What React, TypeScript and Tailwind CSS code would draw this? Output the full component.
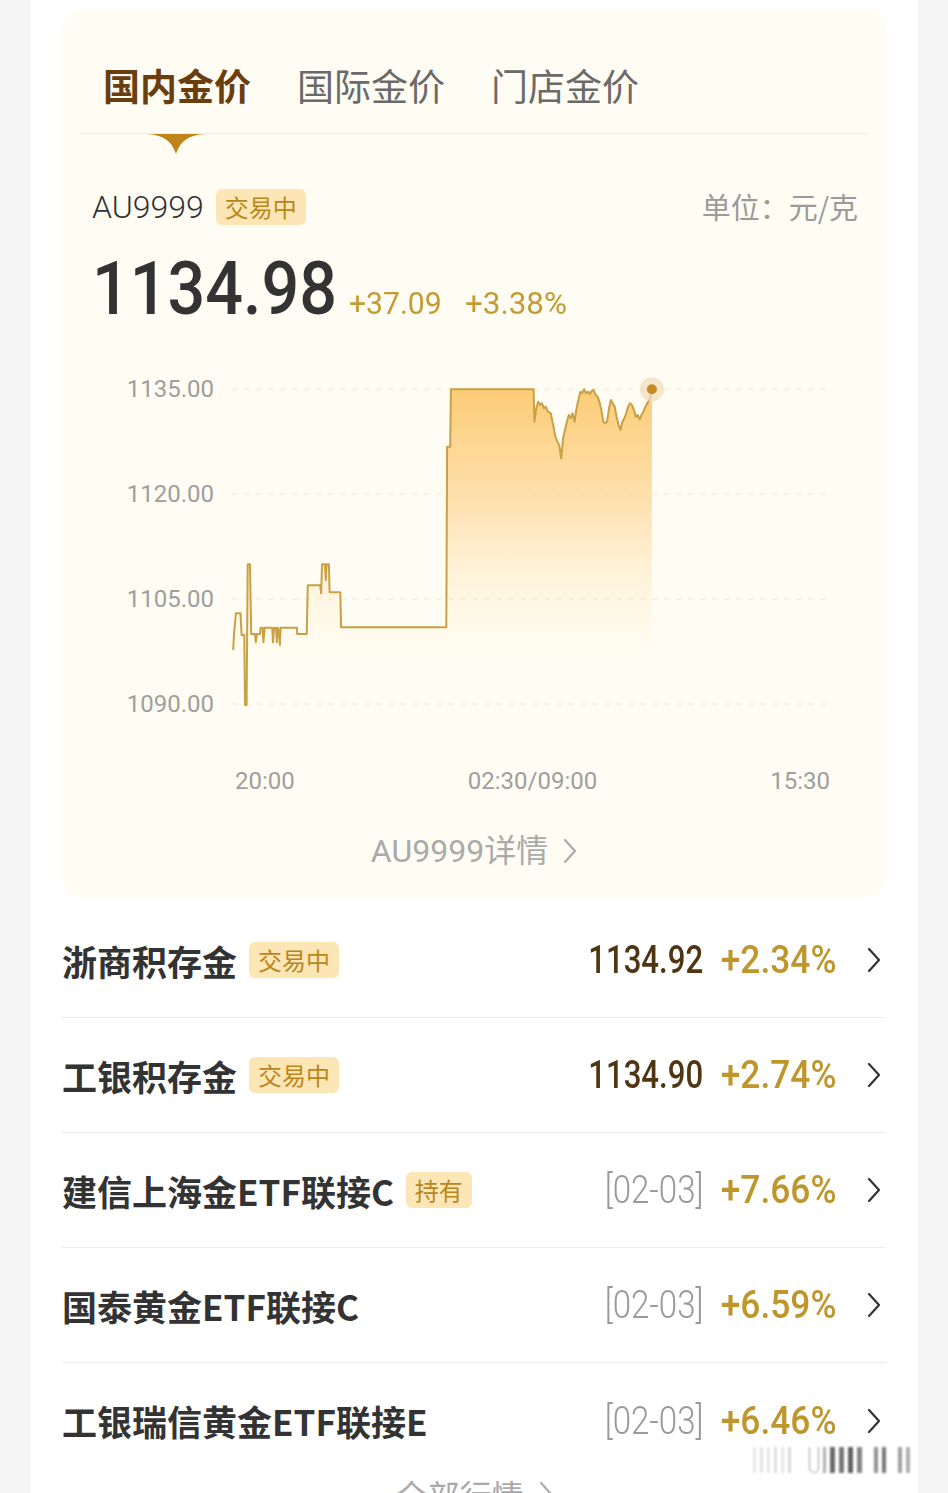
import type { ReactNode } from 'react'

const cjk = "font-['Noto_Sans_CJK_SC',sans-serif]"
const num = "font-['Roboto','Noto_Sans_CJK_SC',sans-serif]"

// 走势图的描点（按截图量出来的坐标，后面统一换算到 svg 坐标）
const RAW: [number, number][] = [
  [348, 900], [350, 855], [355, 790], [367, 790], [370, 855], [377, 855], [379, 1065], [383, 1065],
  [386, 643], [392, 643], [395, 852], [405, 852], [407, 877], [410, 852], [418, 852], [420, 833],
  [425, 833], [427, 877], [430, 833], [450, 833], [452, 877], [455, 833], [460, 833], [462, 877],
  [465, 833], [468, 852], [470, 885], [472, 833], [515, 833], [515, 852], [540, 852], [543, 706],
  [575, 706], [578, 730], [580, 643], [588, 643], [590, 690], [592, 643], [598, 643], [600, 727],
  [628, 727], [630, 832], [905, 832], [907, 290], [915, 290], [917, 118], [1133, 118],
  [1135, 215], [1140, 175], [1145, 155], [1150, 165], [1155, 160], [1160, 175], [1165, 170],
  [1170, 185], [1178, 190], [1185, 230], [1190, 260], [1195, 275], [1200, 285], [1205, 325],
  [1210, 265], [1215, 240], [1220, 215], [1225, 195], [1230, 205], [1235, 190], [1240, 215],
  [1245, 175], [1250, 150], [1255, 125], [1260, 130], [1265, 118], [1270, 130], [1275, 125],
  [1280, 132], [1285, 122], [1290, 120], [1295, 135], [1300, 140], [1305, 155], [1310, 180],
  [1315, 215], [1320, 220], [1325, 215], [1330, 175], [1335, 150], [1340, 160], [1345, 170],
  [1350, 200], [1355, 225], [1360, 240], [1365, 215], [1370, 205], [1375, 190], [1380, 170],
  [1385, 160], [1390, 165], [1395, 180], [1400, 200], [1405, 195], [1410, 208], [1415, 195],
  [1420, 185], [1425, 170], [1430, 160], [1435, 150], [1440, 130], [1442, 118],
]
const PTS = RAW.map(([x, y]) => [+(38 + x / 2.613).toFixed(1), +(y / 3 - 20).toFixed(1)])
const LINE = PTS.map(p => p.join(',')).join(' ')
const LAST = PTS[PTS.length - 1]
const AREA = `${LINE} ${LAST[0]},330 ${PTS[0][0]},330`

const GRID = [
  { label: '1135.00', y: 19 },
  { label: '1120.00', y: 124 },
  { label: '1105.00', y: 229 },
  { label: '1090.00', y: 334 },
]

const ROWS = [
  { name: '浙商积存金', tag: '交易中', price: '1134.92', pct: '+2.34%' },
  { name: '工银积存金', tag: '交易中', price: '1134.90', pct: '+2.74%' },
  { name: '建信上海金ETF联接C', tag: '持有', date: '[02-03]', pct: '+7.66%' },
  { name: '国泰黄金ETF联接C', date: '[02-03]', pct: '+6.59%' },
  { name: '工银瑞信黄金ETF联接E', date: '[02-03]', pct: '+6.46%' },
]

function Chevron({ className }: { className?: string }) {
  return (
    <svg viewBox="0 0 14 26" className={className} fill="none" stroke="currentColor" strokeWidth={2.2}>
      <polyline points="2,2 12,13 2,24" strokeLinecap="round" strokeLinejoin="round" />
    </svg>
  )
}

// 数字字体偏窄，用 scale-x 压一下，外层定宽
function Narrow({ box, inner, children }: { box: string; inner: string; children: ReactNode }) {
  return (
    <span className={`flex ${box}`}>
      <span className={`inline-block whitespace-nowrap ${inner}`}>{children}</span>
    </span>
  )
}

function Tag({ text }: { text: string }) {
  return (
    <span
      className={`${cjk} ml-[12px] flex h-[36px] items-center rounded-[6px] bg-[#fde6b5] px-[9px] text-[24px] leading-none text-[#b8861b]`}
    >
      {text}
    </span>
  )
}

function PriceChart() {
  return (
    <svg width={824} height={350} viewBox="0 0 824 350" className="mt-[44px] block">
      <defs>
        <linearGradient id="gold-fill" x1="0" y1="19" x2="0" y2="300" gradientUnits="userSpaceOnUse">
          <stop offset="0" stopColor="#fcc96f" stopOpacity="0.95" />
          <stop offset="0.4" stopColor="#fdd797" stopOpacity="0.75" />
          <stop offset="1" stopColor="#fff3dc" stopOpacity="0" />
        </linearGradient>
      </defs>
      {GRID.map(g => (
        <g key={g.label}>
          <line x1={170} x2={768} y1={g.y} y2={g.y} stroke="#efe8d6" strokeWidth={1} strokeDasharray="6 6" />
          <text
            x={152}
            y={g.y}
            textAnchor="end"
            dominantBaseline="central"
            fontSize={24}
            fill="#9e9e9e"
            fontFamily="Roboto, sans-serif"
          >
            {g.label}
          </text>
        </g>
      ))}
      <polygon points={AREA} fill="url(#gold-fill)" />
      <polyline points={LINE} fill="none" stroke="#c9a043" strokeWidth={2} strokeLinejoin="round" />
      <circle cx={LAST[0]} cy={LAST[1]} r={12} fill="#f1dcbc" fillOpacity={0.75} />
      <circle cx={LAST[0]} cy={LAST[1]} r={5} fill="#c68a25" />
    </svg>
  )
}

export default function App() {
  return (
    <div className="h-[1493px] overflow-hidden bg-[#f5f5f5]">
      <div className="relative mx-[30px] h-full bg-white px-8 pt-[10px]">
        {/* 金价面板 */}
        <section className="rounded-[20px] bg-[#fffdf3] pt-[57px] pb-[30px]">
          <div className={`${cjk} flex gap-[46px] pl-[41px] text-[37px] leading-none`}>
            <span className="font-bold text-[#6b3e0f]">国内金价</span>
            <span className="text-[#6a6a6a]">国际金价</span>
            <span className="text-[#6a6a6a]">门店金价</span>
          </div>
          <div className="mx-[18px] mt-[29px] h-px bg-[#f3edd9]" />
          <svg width={58} height={20} viewBox="0 0 58 20" className="ml-[85px] block">
            <path d="M0 0H58C42 1 33 7 29 20C25 7 16 1 0 0Z" fill="#c0841a" />
          </svg>

          <div className="mt-[35px] flex h-[35px] items-center pr-[28px] pl-[30px]">
            <span className={`${num} text-[32px] leading-none font-light text-[#333]`}>AU9999</span>
            <Tag text="交易中" />
            <span className={`${cjk} ml-auto text-[29px] leading-none text-[#9a9a9a]`}>单位：元/克</span>
          </div>

          <div className={`${num} mt-[27px] flex items-baseline pl-[30px] leading-none`}>
            <Narrow box="w-[242px]" inner="origin-left scale-x-[0.886]">
              <span className="text-[75px] font-medium text-[#333]">1134.98</span>
            </Narrow>
            <Narrow box="ml-[15px] w-[93px]" inner="origin-left scale-x-[0.94]">
              <span className="text-[32px] text-[#c69a33]">+37.09</span>
            </Narrow>
            <Narrow box="ml-[23px] w-[106px]" inner="origin-left scale-x-[0.98]">
              <span className="text-[32px] text-[#c69a33]">+3.38%</span>
            </Narrow>
          </div>

          <PriceChart />

          <div className={`${num} mt-[49px] flex justify-between pr-[56px] pl-[173px] text-[24px] leading-none text-[#9e9e9e]`}>
            <span>20:00</span>
            <span>02:30/09:00</span>
            <span>15:30</span>
          </div>

          <div className="mt-[42px] flex items-center justify-center text-[#aaaaaa]">
            <span className={`${num} text-[32px] leading-none`}>AU9999详情</span>
            <Chevron className="ml-[15px] h-[26px] w-[14px]" />
          </div>
        </section>

        {/* 列表 */}
        <ul className="mt-[6px]">
          {ROWS.map((r, i) => (
            <li
              key={r.name}
              className={`flex h-[115px] items-center ${i < ROWS.length - 1 ? 'border-b border-[#ececec]' : ''}`}
            >
              <span className={`${cjk} text-[35px] leading-none font-bold text-[#333]`}>{r.name}</span>
              {r.tag && <Tag text={r.tag} />}
              <div className={`${num} ml-auto flex items-center leading-none`}>
                {r.price ? (
                  <Narrow box="w-[113px] justify-end" inner="origin-right scale-x-[0.82]">
                    <span className="text-[38px] font-medium text-[#4f3511]">{r.price}</span>
                  </Narrow>
                ) : (
                  <Narrow box="w-[102px] justify-end" inner="origin-right scale-x-[0.87]">
                    <span className="text-[38px] font-light text-[#999]">{r.date}</span>
                  </Narrow>
                )}
                <Narrow box="ml-[18px] w-[115px] justify-end" inner="origin-right scale-x-[0.93]">
                  <span className="text-[38px] font-medium text-[#bf962c]">{r.pct}</span>
                </Narrow>
                <Chevron className="mr-[5px] ml-[31px] h-[26px] w-[14px] text-[#333]" />
              </div>
            </li>
          ))}
        </ul>

        <div className="flex items-center justify-center text-[#aaaaaa]">
          <span className={`${cjk} text-[32px] leading-none`}>全部行情</span>
          <Chevron className="ml-[15px] h-[26px] w-[14px]" />
        </div>

        {/* 右下角水印 */}
        <div className="absolute top-[1447px] left-[723px] flex h-[26px] items-stretch gap-[4px] opacity-80 blur-[1px]">
          <span className="w-[3px] bg-[#e2e2e2]" />
          <span className="w-[3px] bg-[#dadada]" />
          <span className="w-[3px] bg-[#e0e0e0]" />
          <span className="w-[3px] bg-[#d6d6d6]" />
          <span className="w-[3px] bg-[#dedede]" />
          <span className="w-[3px] bg-[#d2d2d2]" />
          <span className="ml-[14px] w-[10px] rounded-b-full border-x border-b border-[#888]" />
          <span className="w-[3px] bg-[#9a9a9a]" />
          <span className="w-[5px] bg-[#444]" />
          <span className="w-[5px] bg-[#555]" />
          <span className="w-[5px] bg-[#3a3a3a]" />
          <span className="w-[5px] bg-[#666]" />
          <span className="ml-[8px] w-[4px] bg-[#777]" />
          <span className="w-[4px] bg-[#555]" />
          <span className="ml-[8px] w-[4px] bg-[#888]" />
          <span className="w-[4px] bg-[#999]" />
        </div>
      </div>
    </div>
  )
}
